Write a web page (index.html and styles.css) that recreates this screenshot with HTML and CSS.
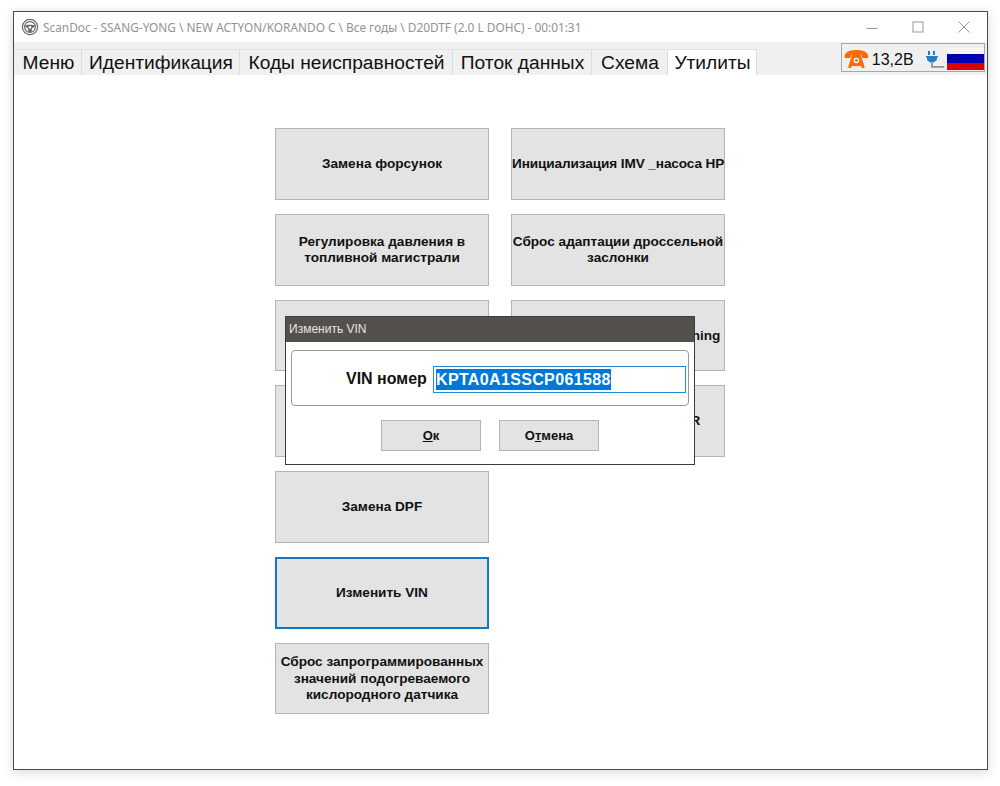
FILE: index.html
```html
<!DOCTYPE html>
<html lang="ru">
<head>
<meta charset="utf-8">
<title>ScanDoc</title>
<link rel="stylesheet" href="styles.css">
</head>
<body>
<div class="window">
  <header class="titlebar">
    <svg class="app-icon" width="18" height="18" viewBox="0 0 18 18" fill="none" stroke="#666" stroke-width="1.200">
      <circle cx="9" cy="9" r="7.600"/>
      <circle cx="9" cy="9" r="5.400"/>
      <path d="M3.600 8 C6 6.400 12 6.400 14.400 8 L11 10.500 L10.500 14 H7.500 L7 10.500 Z" fill="#666" stroke="none"/>
      <circle cx="9" cy="9.400" r="1.400" fill="#fff" stroke="none"/>
    </svg>
    <span class="title-text">ScanDoc - SSANG-YONG \ NEW ACTYON/KORANDO C \ Все годы \ D20DTF (2.0 L DOHC) - 00:01:31</span>
    <div class="controls">
      <svg width="12" height="12" viewBox="0 0 12 12" stroke="#999" fill="none"><path d="M0.500 7.500H11.500"/></svg>
      <svg width="12" height="12" viewBox="0 0 12 12" stroke="#999" fill="none"><rect x="1" y="1" width="10" height="10"/></svg>
      <svg width="12" height="12" viewBox="0 0 12 12" stroke="#999" fill="none"><path d="M0.500 0.500L11.500 11.500M11.500 0.500L0.500 11.500"/></svg>
    </div>
  </header>
  <nav class="tabstrip">
    <div class="tabs">
      <span class="tab tab-menu">Меню</span>
      <span class="tab tab-id">Идентификация</span>
      <span class="tab tab-codes">Коды неисправностей</span>
      <span class="tab tab-flow">Поток данных</span>
      <span class="tab tab-scheme">Схема</span>
      <span class="tab tab-util active">Утилиты</span>
    </div>
    <div class="status">
      <svg class="phone" width="25" height="18" viewBox="0 0 25 18">
        <path d="M0.500 6.500 C1 1.500 7 0 12.500 0 C18 0 24 1.500 24.500 6.500 L24 8 H18.500 L17.500 4.500 H7.500 L6.500 8 H1 Z" fill="#ff6a00"/>
        <path d="M8.500 4 H16.500 L20.500 16 H4.500 Z" fill="#ff6a00"/>
        <circle cx="12.500" cy="10.500" r="2.800" fill="#fff"/>
        <circle cx="12.500" cy="10.500" r="1.400" fill="#ff6a00"/>
        <path d="M4.500 16 H7.500 V18 H4.500 Z M17.500 16 H20.500 V18 H17.500 Z" fill="#ff6a00"/>
      </svg>
      <span class="voltage">13,2В</span>
      <svg class="plug" width="19" height="19" viewBox="0 0 19 19" fill="none">
        <path d="M6 13 V17 H18.500" stroke="#8a949a" stroke-width="1.800"/>
        <path d="M3 1 V5 M8 1 V5" stroke="#1f7fc4" stroke-width="2"/>
        <path d="M0 6 H12 V7.500 H11 V10 L7.500 12.500 H4 L1 10 V7.500 H0 Z" fill="#1f7fc4"/>
      </svg>
      <span class="flag"><i class="flag-white"></i><i class="flag-blue"></i><i class="flag-red"></i></span>
    </div>
  </nav>
  <main class="content">
    <div class="column">
      <button class="action">Замена форсунок</button>
      <button class="action">Регулировка давления в топливной магистрали</button>
      <button class="action"></button>
      <button class="action"></button>
      <button class="action">Замена DPF</button>
      <button class="action focused">Изменить VIN</button>
      <button class="action">Сброс запрограммированных значений подогреваемого кислородного датчика</button>
    </div>
    <div class="column">
      <button class="action tight">Инициализация IMV _насоса HP</button>
      <button class="action">Сброс адаптации дроссельной заслонки</button>
      <button class="action nowrap">Адаптация форсунок Learning</button>
      <button class="action">Адаптация клапана EGR</button>
    </div>
  </main>
  <section class="dialog">
    <div class="dialog-title">Изменить VIN</div>
    <div class="dialog-body">
      <div class="group">
        <span class="vin-label">VIN номер</span>
        <div class="vin-input"><span class="selected">KPTA0A1SSCP061588</span></div>
      </div>
      <div class="dialog-buttons">
        <button class="dialog-btn"><u>О</u>к</button>
        <button class="dialog-btn">О<u>т</u>мена</button>
      </div>
    </div>
  </section>
</div>
</body>
</html>
```
FILE: styles.css
```css
* { box-sizing: border-box; }
html, body { margin: 0; height: 100%; background: #fff; }
body { padding: 11px 12px 16px 13px; font-family: "Liberation Sans", Arial, sans-serif; }
.window {
  position: relative;
  height: 759px;
  border: 1px solid #4a4a4a;
  background: #fff;
  box-shadow: 0 2px 10px rgba(0,0,0,.16);
  display: flex;
  flex-direction: column;
}
.titlebar { height: 30px; display: flex; align-items: center; padding-left: 7px; background: #fff; }
.app-icon { margin-right: 4px; }
.title-text { font: 11.85px "Noto Sans", "Open Sans", sans-serif; color: #929292; white-space: nowrap; }
.controls { margin-left: auto; display: flex; gap: 35px; padding-right: 17px; }
.controls svg + svg { margin-left: -1px; }
.tabstrip { height: 33px; background: #f0f0f0; display: flex; align-items: flex-end; justify-content: space-between; padding-left: 1px; }
.tabs { display: flex; height: 26px; }
.tab {
  font-size: 19.2px;
  line-height: 26px;
  color: #111;
  text-align: center;
  padding-left: 1px;
  border-right: 1px solid #dcdcdc;
  border-top: 1px solid #e2e2e2;
  white-space: nowrap;
}
.tab-menu { width: 67px; }
.tab-id { width: 158px; }
.tab-codes { width: 213px; }
.tab-flow { width: 139px; }
.tab-scheme { width: 76px; }
.tab-util { width: 89px; }
.tab.active { background: #fff; }
.status {
  align-self: flex-start;
  margin: 1px 2px 0 0;
  width: 144px;
  height: 29px;
  border: 1px solid #a8a8a8;
  display: flex;
  align-items: center;
  padding: 4px 0 0 2px;
  background: #f0f0f0;
}
.phone { margin-right: 3px; margin-top: -1px; }
.voltage { font-size: 16px; color: #111; width: 55px; }
.plug { margin-right: 2px; margin-top: -1px; }
.flag { width: 37px; height: 22px; display: flex; flex-direction: column; margin-top: -1px; }
.flag i { display: block; }
.flag-white { height: 6px; background: #f5f5f5; }
.flag-blue { height: 9px; background: #0000b0; }
.flag-red { height: 7px; background: #d80000; }
.content { flex: 1; display: flex; justify-content: center; gap: 22px; padding: 53px 1px 0 0; }
.column { width: 214px; display: flex; flex-direction: column; gap: 14px; }
.action {
  height: 71.75px;
  padding: 1px 0 0;
  border: 1px solid #b4b4b4;
  background: #e3e3e3;
  font: bold 13.6px/16.4px "Liberation Sans", Arial, sans-serif;
  color: #111;
}
.action.focused { border: 2px solid #0f78c8; }
.action.nowrap { white-space: nowrap; overflow: hidden; }
.action.tight { white-space: nowrap; letter-spacing: -.1px; }
.dialog {
  position: absolute;
  left: 271px;
  top: 304px;
  width: 410px;
  height: 149px;
  border: 1px solid #3c3c3c;
  background: #fff;
  display: flex;
  flex-direction: column;
}
.dialog-title { height: 25px; background: #54504c; color: #e4e4e4; font-size: 12px; line-height: 24px; padding-left: 3px; }
.dialog-body { flex: 1; padding: 8px 5px 0; }
.group {
  height: 56px;
  border: 1px solid #9a9a9a;
  border-radius: 4px;
  display: flex;
  align-items: center;
  padding: 2px 0 0 54px;
}
.vin-label { font-size: 16px; font-weight: bold; color: #111; width: 87px; }
.vin-input { width: 253px; height: 27px; border: 1px solid #1f8ad8; padding: 2px 0 2px 2px; display: flex; }
.selected { background: #0078d7; color: #fff; font-size: 16px; font-weight: bold; line-height: 21px; letter-spacing: .35px; }
.dialog-buttons { display: flex; justify-content: center; gap: 18px; margin-top: 14px; }
.dialog-btn {
  width: 100px;
  height: 31px;
  padding: 0;
  border: 1px solid #b4b4b4;
  background: #e3e3e3;
  font: bold 13px "Liberation Sans", Arial, sans-serif;
  color: #111;
}
```
